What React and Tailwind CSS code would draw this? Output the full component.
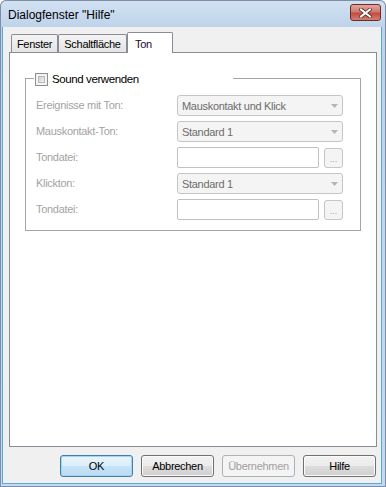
import React from "react";

const font = { fontFamily: '"Liberation Sans", Arial, sans-serif' };

function Combo({ value }) {
  return (
    <div className="flex items-center justify-between w-[166px] h-[21px] rounded-[3px] border border-[#c5c5c5] bg-[#f4f4f4] pl-[4px] pr-[4px]">
      <span className="text-[#6d6d6d] pt-[2px]">{value}</span>
      <svg width="7" height="4" viewBox="0 0 7 4">
        <polygon points="0,0 7,0 3.5,4" fill="#b4b4b4" />
      </svg>
    </div>
  );
}

function FileField() {
  return (
    <div className="flex items-center gap-[5px]">
      <div className="w-[142px] h-[21px] rounded-[2px] border border-[#c0c0c0] bg-white" />
      <div className="w-[19px] h-[20px] rounded-[3px] border border-[#c5c5c5] bg-[#f4f4f4] flex items-end justify-center pb-[3px]">
        <span className="text-[9px] leading-none text-[#a0a0a0] tracking-normal">...</span>
      </div>
    </div>
  );
}

function Row({ label, children }) {
  return (
    <div className="flex items-center h-[21px]">
      <span className="w-[141px] text-[#a3a3a3] -mt-[1px]">{label}</span>
      {children}
    </div>
  );
}

function Button({ children, primary, disabled }) {
  const look = primary
    ? "border-[#3c7fb1] bg-[linear-gradient(#eaf4fb_0%,#dbeefa_50%,#c7e3f6_51%,#b9dcf3_100%)] shadow-[inset_0_0_0_1px_#a6d3f2]"
    : disabled
    ? "border-[#adb2b5] bg-[#f4f4f4] text-[#a0a0a0]"
    : "border-[#707070] bg-[linear-gradient(#f2f2f2_0%,#ebebeb_50%,#dddddd_51%,#cfcfcf_100%)] shadow-[inset_0_0_0_1px_#fbfbfb]";
  return (
    <div className={`w-[73px] h-[22px] rounded-[3px] border flex items-center justify-center pt-[1px] ${look}`}>
      {children}
    </div>
  );
}

export default function App() {
  return (
    <div
      style={font}
      className="w-[386px] h-[487px] rounded-t-[6px] flex flex-col bg-[linear-gradient(#d3e2f2_0px,#bed3ea_27px,#c4d8ee_100%)] shadow-[inset_0_0_0_1px_#7d8fa8] text-[11px] tracking-[-0.3px] text-black"
    >
      {/* Titelleiste */}
      <div className="h-[27px] flex justify-between pl-[8px] pr-[5px]">
        <span className="text-[12px] tracking-normal pt-[6px]">Dialogfenster "Hilfe"</span>
        <div className="mt-[4px] w-[31px] h-[17px] rounded-[3px] border border-[#6e2a26] bg-[linear-gradient(#e3a59b_0%,#d07a70_45%,#c24c40_55%,#d27f70_100%)] flex items-center justify-center">
          <svg width="13" height="10" viewBox="0 0 13 10">
            <path d="M2 1.5 L11 8.5 M11 1.5 L2 8.5" stroke="#5a2a28" strokeWidth="3.6" strokeLinecap="square" />
            <path d="M2 1.5 L11 8.5 M11 1.5 L2 8.5" stroke="#ffffff" strokeWidth="2" strokeLinecap="square" />
          </svg>
        </div>
      </div>

      {/* Clientbereich */}
      <div className="ml-[2px] mr-[4px] mb-[3px] flex-1 border-x border-b border-[#5aa8de] bg-[#f0f0f0] flex flex-col pt-[5px] pb-[6px] pl-[6px] pr-[4px]">
        {/* Reiter */}
        <div className="flex h-[20px] pl-[2px]">
          <div className="w-[47px] h-[18px] mt-[2px] rounded-t-[2px] border-x border-t border-[#898c95] bg-[linear-gradient(#f4f4f4,#e4e4e4)] flex items-center justify-center pt-[2px]">
            Fenster
          </div>
          <div className="w-[69px] h-[18px] mt-[2px] rounded-t-[2px] border-x border-t border-[#898c95] bg-[linear-gradient(#f4f4f4,#e4e4e4)] flex items-center justify-center pt-[2px]">
            Schaltfläche
          </div>
          <div className="relative z-10 w-[46px] h-[21px] rounded-t-[2px] border-x border-t border-[#898c95] bg-white flex items-start pl-[7px] pt-[3px] text-[#1c0530]">
            Ton
          </div>
        </div>

        {/* Registerseite */}
        <div className="w-[368px] h-[395px] border border-[#898c95] bg-white pl-[15px] pt-[25px]">
          <div className="relative w-[336px] border border-[#a5a5a5] pl-[10px] pt-[16px] pb-[10px] flex flex-col gap-[5px]">
            <div className="absolute left-[8px] -top-[8px] h-[16px] w-[199px] bg-white flex items-center pl-[1px] gap-[4px]">
              <div className="w-[13px] h-[13px] border border-[#8e8f8f] bg-[#f4f4f4] p-[2px]">
                <div className="w-full h-full border border-[#b9b9b9] bg-[linear-gradient(135deg,#d0d0d0,#f3f3f3)]" />
              </div>
              <span className="text-[11.5px] tracking-[-0.4px] pt-[1px]">Sound verwenden</span>
            </div>

            <Row label="Ereignisse mit Ton:">
              <Combo value="Mauskontakt und Klick" />
            </Row>
            <Row label="Mauskontakt-Ton:">
              <Combo value="Standard 1" />
            </Row>
            <Row label="Tondatei:">
              <FileField />
            </Row>
            <Row label="Klickton:">
              <Combo value="Standard 1" />
            </Row>
            <Row label="Tondatei:">
              <FileField />
            </Row>
          </div>
        </div>

        {/* Schaltflächen */}
        <div className="mt-[8px] flex justify-end gap-[8px] pr-[1px]">
          <Button primary>OK</Button>
          <Button>Abbrechen</Button>
          <Button disabled>Übernehmen</Button>
          <Button>Hilfe</Button>
        </div>
      </div>
    </div>
  );
}
